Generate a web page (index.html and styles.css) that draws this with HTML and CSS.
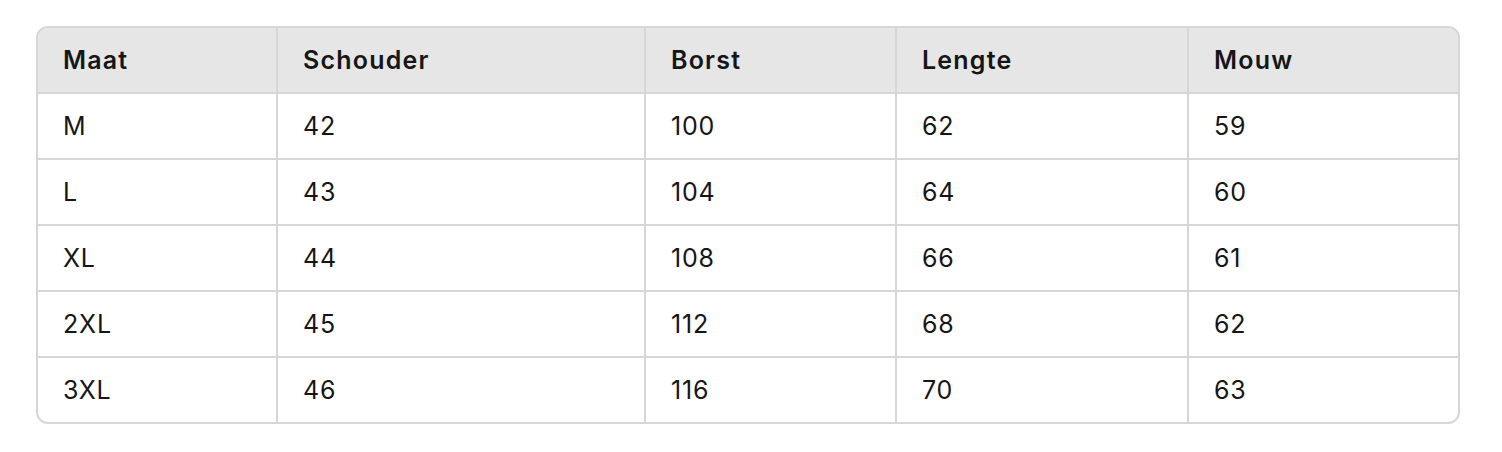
FILE: index.html
```html
<!DOCTYPE html>
<html lang="nl">
<head>
<meta charset="utf-8">
<title>Maattabel</title>
<link rel="stylesheet" href="styles.css">
</head>
<body>
<div class="page">
  <div class="table-wrap">
    <table class="size-table">
      <colgroup>
        <col class="c1"><col class="c2"><col class="c3"><col class="c4"><col class="c5">
      </colgroup>
      <thead>
        <tr><th>Maat</th><th>Schouder</th><th>Borst</th><th>Lengte</th><th>Mouw</th></tr>
      </thead>
      <tbody>
        <tr><td>M</td><td>42</td><td>100</td><td>62</td><td>59</td></tr>
        <tr><td>L</td><td>43</td><td>104</td><td>64</td><td>60</td></tr>
        <tr><td>XL</td><td>44</td><td>108</td><td>66</td><td>61</td></tr>
        <tr><td>2XL</td><td>45</td><td>112</td><td>68</td><td>62</td></tr>
        <tr><td>3XL</td><td>46</td><td>116</td><td>70</td><td>63</td></tr>
      </tbody>
    </table>
  </div>
</div>
</body>
</html>
```
FILE: styles.css
```css
html, body {
  margin: 0;
  padding: 0;
  background: #ffffff;
}
.page {
  padding: 26px 36px;
  font-family: Inter, "Noto Sans", sans-serif;
  color: #161616;
}
.table-wrap {
  width: 1424px;
  box-sizing: border-box;
  border: 2px solid #d6d6d6;
  border-radius: 12px;
  overflow: hidden;
}
.size-table {
  width: 1420px;
  table-layout: fixed;
  border-collapse: separate;
  border-spacing: 0;
  font-size: 25px;
}
.c1 { width: 240px; }
.c2 { width: 368px; }
.c3 { width: 251px; }
.c4 { width: 292px; }
.c5 { width: 269px; }
.size-table th,
.size-table td {
  height: 64px;
  box-sizing: content-box;
  padding: 0 24px 0 25px;
  text-align: left;
  vertical-align: middle;
  border-right: 2px solid #d6d6d6;
  border-bottom: 2px solid #d6d6d6;
  line-height: 1;
}
.size-table th:last-child,
.size-table td:last-child {
  border-right: none;
}
.size-table tbody tr:last-child td {
  border-bottom: none;
}
.size-table th {
  background: #e6e6e6;
  font-weight: 600;
  letter-spacing: 1.2px;
}
.size-table td {
  font-weight: 400;
  letter-spacing: 0.8px;
}
```
